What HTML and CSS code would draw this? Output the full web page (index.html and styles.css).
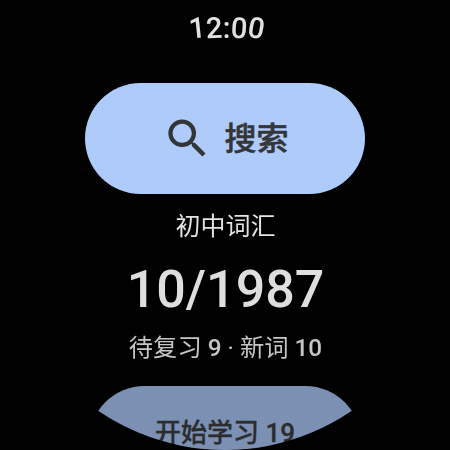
FILE: index.html
```html
<!DOCTYPE html>
<html lang="zh">
<head>
<meta charset="utf-8">
<title>初中词汇</title>
<link rel="stylesheet" href="styles.css">
</head>
<body>
<main class="screen">
  <div class="time">
    <span class="ch c1">1</span><span class="ch c2">2</span><span class="ch c3">:</span><span class="ch c4">0</span><span class="ch c5">0</span>
  </div>
  <button class="search">
    <svg class="icon" viewBox="0 0 24 24" width="51" height="51" aria-hidden="true"><path fill="currentColor" d="M15.5 14h-.79l-.28-.27A6.47 6.47 0 0 0 16 9.5 6.5 6.5 0 1 0 9.5 16c1.61 0 3.09-.59 4.23-1.57l.27.28v.79l5 4.99L20.49 19l-4.99-5zm-6 0C7.01 14 5 11.99 5 9.5S7.01 5 9.5 5 14 7.01 14 9.5 11.99 14 9.5 14z"/></svg>
    <span class="search-label">搜索</span>
  </button>
  <div class="book">初中词汇</div>
  <div class="count">10/1987</div>
  <div class="detail">待复习 <b>9</b> · 新词 <b>10</b></div>
  <button class="start">开始学习 19</button>
</main>
</body>
</html>
```
FILE: styles.css
```css
* { box-sizing: border-box; }
html, body { margin: 0; padding: 0; background: #000; }
.screen {
  width: 450px; height: 450px; overflow: hidden; border-radius: 50%;
  background: #000; display: flex; flex-direction: column; align-items: center;
  font-family: Roboto, "Noto Sans CJK SC", sans-serif;
}
.screen > * { flex: none; will-change: opacity; }
.time { height: 83px; padding: 11px 0 0 3px; display: flex; align-items: flex-start; gap: 0.6px; color: #e2e2e2; font-size: 29px; line-height: 34px; font-weight: 500; }
.ch { display: block; }
.c1 { transform: rotate(-6deg); }
.c2 { transform: rotate(-2deg); }
.c4 { transform: rotate(4deg); }
.c5 { transform: rotate(10deg); }
.search {
  width: 280px; height: 111px; border: 0; border-radius: 56px; background: #aecbfa; color: #333537;
  display: flex; align-items: center; justify-content: center; gap: 11px; padding: 0 0 0 1px;
  font: 500 32px/40px Roboto, "Noto Sans CJK SC", sans-serif;
}
.search-label { -webkit-text-stroke: 0.5px currentColor; }
.icon { flex: none; }
.book { margin-top: 16px; padding-left: 1px; color: #e2e2e2; font-size: 25px; line-height: 34px; }
.count { margin-top: 16px; padding-left: 1px; color: #dedede; font-size: 52px; line-height: 60px; font-weight: 500; }
.detail { margin-top: 11px; color: #c6c6c6; font-size: 24.3px; line-height: 34px; padding-left: 1px; }
.detail b { font-weight: 500; }
.start {
  margin-top: 21px; width: 272px; height: 111px; border: 0; border-radius: 56px; background: #7b90b2; color: #2b2c2e;
  font: 500 26px/34px Roboto, "Noto Sans CJK SC", sans-serif; padding: 0 0 18px;
  display: flex; justify-content: center; align-items: center; -webkit-text-stroke: 0.3px currentColor;
}
```
